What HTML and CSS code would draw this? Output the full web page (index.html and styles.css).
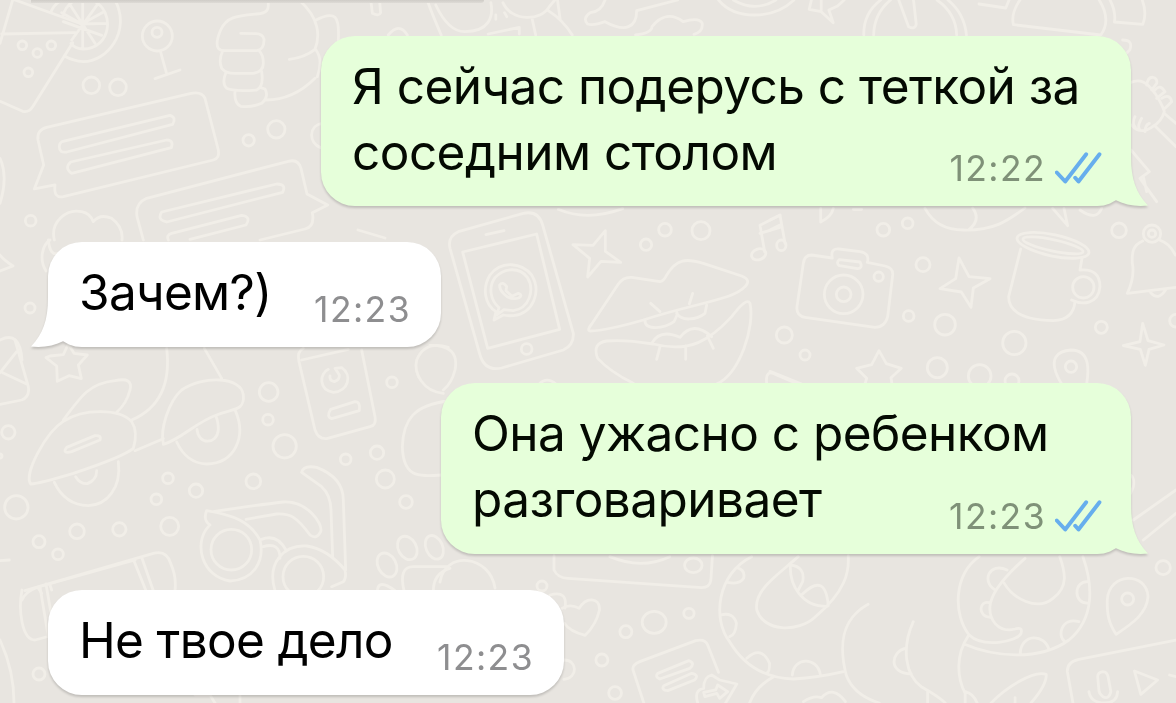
FILE: index.html
```html
<!DOCTYPE html>
<html lang="ru">
<head>
  <meta charset="UTF-8" />
  <meta name="viewport" content="width=device-width, initial-scale=1.0"/>
  <title>Чат</title>
  <link rel="stylesheet" href="styles.css">
</head>
<body>
  <svg class="wallpaper" viewBox="0 0 1176 703" aria-hidden="true">
    <!-- cocktail, microphone, fist, speech bubbles -->
    <g transform="scale(.33333)">
      <path d="M38 0L0 130M45 0L245 72M5 102L225 98M218 128L98 320Q88 338 68 334L0 304"/>
      <path d="M152 38Q160 15 185 0M188 50Q195 20 220 3M282 3C345 35 335 145 250 147Q225 146 213 130M345 0C395 95 320 185 250 185Q220 183 193 168M248 0V147M185 38L245 72L322 70M210 14L285 130M292 14L215 120M190 65L305 106M312 35L245 72"/>
      <circle cx="67" cy="136" r="13"/><circle cx="154" cy="136" r="13"/><circle cx="112" cy="159" r="13"/><circle cx="85" cy="217" r="13"/>
      <circle cx="274" cy="256" r="25"/><circle cx="354" cy="262" r="25"/><circle cx="92" cy="662" r="16"/><circle cx="746" cy="421" r="17"/><circle cx="829" cy="388" r="26"/>
      <circle cx="472" cy="108" r="45"/><circle cx="471" cy="97" r="15"/><path d="M481 153L499 218M465 236L540 210"/>
      <path d="M803 0C810 30 800 40 770 42C710 48 680 50 662 90Q645 130 655 145Q662 153 680 152H770Q793 148 792 118Q788 100 765 101L722 100M668 153Q655 180 665 205Q680 222 710 220H760Q790 216 790 190Q790 165 778 153M677 220Q665 250 680 265Q700 275 770 270Q792 260 785 215M705 274Q702 310 722 319Q755 323 785 310Q808 290 795 267L780 262M798 300C870 300 915 265 945 235M897 0C960 55 960 110 945 148Q915 172 868 178M948 60Q990 38 1005 52Q1018 65 1015 120M948 150Q970 180 952 230M968 370C925 375 925 430 962 443"/>
      <path d="M140 382L570 281Q605 273 615 295L655 450Q660 475 640 480L190 590Q160 596 165 555L103 567L131 495L114 420Q110 390 140 382Z"/>
      <path d="M186 425L510 346Q530 352 518 373L200 456Q178 460 178 440Q178 430 186 425ZM212 486L500 420Q522 420 514 443L215 520Q192 505 212 486Z"/>
      <path d="M430 720L411 650Q405 610 440 595L865 484Q895 476 903 505L921 582L983 615L937 638Q945 680 915 687L780 720M485 636L830 552Q860 552 848 577L500 666Q470 660 485 636ZM505 720Q498 705 515 700L725 646Q755 650 738 675L570 718"/>
      <path d="M163 720C150 665 200 625 245 635Q270 640 280 665Q300 640 335 655Q370 680 366 720M0 475Q25 530 0 610M175 760Q150 770 145 720"/>
    </g>
    <!-- phone, sparkle, lips, note -->
    <g transform="translate(430 200) scale(.33333)">
      <path d="M85 95L280 40Q325 30 338 75L430 400Q432 435 400 450L215 504Q165 515 150 465L60 145Q52 110 85 95ZM98 156L320 102L389 388L173 445ZM168 104L222 92"/>
      <circle cx="290" cy="447" r="16"/>
      <path d="M192 360L198 335C165 315 155 265 180 225C215 180 275 188 305 225C335 275 310 340 250 347Q232 348 220 345ZM200 345L207 323C180 300 175 260 195 233C225 200 270 203 292 232C315 270 298 325 250 332L222 329Z"/>
      <path d="M209 255Q218 243 230 260L228 272L246 289L265 280Q280 285 266 294Q240 302 220 280Q208 268 209 255Z"/>
      <path d="M429 134L489 136L526 92L526 154L572 187L513 184L473 231L479 175Z"/>
      <circle cx="648" cy="134" r="17"/><circle cx="705" cy="89" r="19"/><circle cx="813" cy="92" r="27"/>
      <path d="M480 393Q470 390 485 372L565 252Q580 230 605 232L690 245Q702 243 710 225C740 175 770 175 820 190L935 228Q965 240 945 260C910 300 790 310 640 360Q530 392 480 393Z"/>
      <path d="M662 310L690 335M788 280L778 312M645 362C645 390 700 388 732 365Q745 340 740 335M740 340C755 365 800 360 825 340L830 315"/>
      <path d="M610 550Q540 515 503 475Q485 430 530 423Q580 418 670 432C780 460 840 420 905 350Q950 290 960 310C975 380 930 520 860 552M665 430Q690 385 750 412Q790 360 845 410M690 440L680 478M767 438V478M832 408L850 445"/>
      <path d="M385 28Q470 65 578 26M0 436C60 435 85 460 75 510Q65 550 40 570M330 550Q350 530 378 552M1050 45L990 76L1004 155M990 100L1050 82M1010 550Q1005 505 1040 525L1110 555"/>
      <ellipse cx="986" cy="163" rx="22" ry="16" transform="rotate(-20 986 163)"/>
    </g>
    <!-- camera, mug, bell, stars -->
    <g transform="translate(770 200) scale(.33333)">
      <path d="M0 60L30 46L45 130M0 90L30 75"/><ellipse cx="34" cy="136" rx="14" ry="16"/>
      <circle cx="340" cy="89" r="19"/><circle cx="413" cy="70" r="16"/><circle cx="459" cy="194" r="21"/><circle cx="525" cy="374" r="31"/><circle cx="416" cy="348" r="16"/><circle cx="43" cy="405" r="24"/><circle cx="105" cy="465" r="15"/><circle cx="733" cy="429" r="35"/><circle cx="502" cy="503" r="30"/><circle cx="629" cy="528" r="34"/><circle cx="726" cy="543" r="21"/><circle cx="994" cy="382" r="18"/><circle cx="1047" cy="91" r="22"/><circle cx="1218" cy="362" r="19"/>
      <path d="M125 165L187 174Q180 145 207 147L270 155Q300 160 292 187L345 198Q370 203 368 225L353 350Q345 382 315 382L105 352Q78 348 81 320L100 190Q103 165 125 165ZM208 179L270 186Q280 205 262 206L208 197Q197 188 208 179Z"/>
      <circle cx="221" cy="283" r="58"/><circle cx="221" cy="283" r="22"/><circle cx="326" cy="230" r="14"/>
      <path d="M567 174L597 230L660 236L610 264L603 322L574 276L510 266L557 236Z"/>
      <ellipse cx="849" cy="136" rx="110" ry="32" transform="rotate(12 849 136)"/><ellipse cx="849" cy="136" rx="92" ry="17" transform="rotate(12 849 136)"/>
      <path d="M752 147L716 290C715 345 780 360 850 362Q910 360 915 305M936 175L930 210Q990 205 990 260C985 315 935 315 905 300"/><circle cx="940" cy="262" r="32"/>
      <path d="M1118 123C1090 135 1085 155 1087 190Q1095 230 1072 280L1218 262M1168 120Q1200 130 1216 165M1142 278Q1165 305 1188 268"/><circle cx="1146" cy="101" r="26"/><circle cx="1146" cy="101" r="11"/>
      <path d="M1118 370L1134 422L1182 435L1137 448L1126 496L1111 448L1060 437L1110 425Z"/>
      <path d="M285 552L290 535L260 505L305 494L327 452L349 491L394 505L363 533L366 552M0 514L95 552"/>
      <path d="M875 552C825 470 870 452 903 450C965 450 955 520 950 552"/><circle cx="903" cy="500" r="17"/>
      <path d="M465 25Q500 90 580 90C670 92 710 65 765 24M608 24Q635 60 595 90M152 25V66Q185 50 190 25M848 25L893 77L882 25M930 30Q980 65 995 25M250 28H275"/>
    </g>
    <!-- cap, rocket eyes, glasses, paw -->
    <g transform="translate(0 340) scale(.33333)">
      <path d="M45 0L85 140Q90 170 65 180L0 193M50 35L0 98M8 98L80 132"/>
      <path d="M150 48L190 44L205 12L222 40L262 45L235 75L244 116L207 107L172 124L170 78L138 53Z"/>
      <path d="M190 240C245 165 270 130 345 122Q400 110 390 150Q380 190 350 217M92 432C70 400 140 275 190 244C250 205 360 205 395 245Q415 275 400 325C370 350 280 380 220 400Q120 430 92 432ZM500 25C515 150 465 210 395 240M405 332L490 296M200 322L285 287Q305 285 300 300L215 335Q185 342 200 322Z"/>
      <path d="M355 365C365 445 320 495 265 497Q195 495 163 427M227 410Q240 432 262 431Q290 420 290 392"/>
      <path d="M490 310C480 270 505 185 545 150C610 105 725 110 730 165C735 215 695 205 650 225C590 245 540 300 490 313M613 25L665 115M706 212C740 290 705 370 620 372Q560 370 530 306M591 268C595 315 650 315 655 270Q655 245 648 230"/>
      <circle cx="806" cy="156" r="28"/><circle cx="804" cy="239" r="16"/><circle cx="854" cy="319" r="35"/><circle cx="1176" cy="127" r="16"/><circle cx="1131" cy="338" r="20"/><circle cx="1037" cy="358" r="16"/><circle cx="1156" cy="417" r="27"/><circle cx="1218" cy="486" r="19"/><circle cx="760" cy="424" r="22"/><circle cx="504" cy="415" r="16"/><circle cx="588" cy="452" r="20"/><circle cx="469" cy="478" r="16"/><circle cx="509" cy="559" r="27"/><circle cx="358" cy="568" r="20"/><circle cx="231" cy="574" r="22"/><circle cx="117" cy="605" r="18"/><circle cx="174" cy="643" r="16"/><circle cx="49" cy="502" r="35"/><circle cx="25" cy="277" r="20"/><circle cx="0" cy="348" r="6"/>
      <path d="M910 25Q890 35 897 65L945 270Q955 298 980 296L1110 260Q1130 255 1125 230L1085 30M905 60L1045 28M992 208L1065 185Q1082 185 1078 212L995 236Q978 230 992 208Z"/>
      <path d="M985 88C958 100 955 150 1000 157C1045 155 1058 105 1025 83L1005 85L1018 105Q1020 118 1003 125Q988 122 990 108"/>
      <path d="M1330 160C1270 155 1240 100 1250 60Q1275 0 1345 22M1345 183C1240 195 1210 240 1207 320C1210 410 1250 410 1325 405"/>
      <circle cx="694" cy="629" r="61"/><circle cx="910" cy="710" r="61"/>
      <path d="M625 560C580 610 605 710 690 723C760 720 795 665 780 600C750 545 700 525 620 512Q608 540 630 555M640 515Q770 495 850 486C920 482 970 550 962 575Q950 600 930 585C890 530 870 520 830 522L738 538M785 598Q830 580 858 630M790 620Q840 605 840 655M825 752C800 670 850 615 920 618C970 625 1010 660 1035 690Q1040 715 1030 725L995 740M905 397Q910 375 950 382C1010 405 1030 440 1030 480L1037 690M905 397L965 440Q992 465 993 510L998 650"/>
      <path d="M75 752L460 640Q500 630 512 670Q530 710 525 752M400 658L438 752M425 652L460 752M115 745L125 760M150 735L155 750M0 662L28 660"/>
      <ellipse cx="1161" cy="675" rx="27" ry="38" transform="rotate(-28 1161 675)"/><ellipse cx="1222" cy="624" rx="27" ry="37" transform="rotate(-28 1222 624)"/><ellipse cx="1303" cy="622" rx="25" ry="37" transform="rotate(-24 1303 622)"/>
      <path d="M1212 752Q1195 680 1240 680H1340M1350 685Q1300 700 1300 752M1132 752Q1135 715 1185 752"/>
    </g>
    <!-- bottom right: heart, doughnut, octopus, pin, keyboard -->
    <g transform="translate(550 545) scale(.3992 .33333)">
      <path d="M10 32V75Q20 100 45 100L380 128Q400 128 403 105L407 32M150 35Q230 75 300 35"/>
      <ellipse cx="359" cy="61" rx="22" ry="22"/><ellipse cx="261" cy="232" rx="30" ry="33"/><ellipse cx="348" cy="205" rx="13" ry="15"/><ellipse cx="190" cy="260" rx="15" ry="18"/><ellipse cx="130" cy="345" rx="15" ry="18"/><ellipse cx="163" cy="444" rx="16" ry="19"/><ellipse cx="1536" cy="68" rx="18" ry="21"/>
      <path d="M30 190Q50 175 73 190C90 155 125 155 124 195Q115 240 88 271Q50 260 36 235M35 345C70 345 70 400 35 403"/>
      <path d="M235 474L208 375Q205 360 225 350L365 287Q388 280 395 300L422 382M270 385L348 347Q365 355 350 370L275 402Q262 395 270 385ZM285 422L355 385Q375 390 362 405L295 437Q278 435 285 422Z"/>
      <path d="M370 474Q360 435 385 430Q385 395 405 390L425 405L468 417L440 474M385 442L415 435L420 420L445 440L425 460L418 445L388 455Z"/>
      <path d="M505 35C420 85 405 220 450 290C490 370 550 400 610 402Q670 398 735 380M622 35C570 90 510 135 518 195C535 260 620 265 665 215C740 140 750 80 747 32M468 68Q490 75 485 100Q475 120 445 112M427 210Q460 200 467 235Q465 270 450 275M493 340Q530 300 550 355Q550 380 545 382M607 390C610 335 670 335 677 388M602 60Q640 65 633 110L622 135M602 60C600 120 630 185 695 184M632 148Q690 80 697 182M500 474Q515 425 560 395M635 470Q660 450 680 458Q710 420 740 470"/>
      <path d="M797 178C725 225 725 310 742 390Q760 450 825 474M910 230C880 310 890 390 930 425Q975 455 990 474M890 310C855 320 845 385 905 387M946 440V474"/>
      <path d="M1075 35C1010 90 1010 210 1050 270C1085 310 1170 290 1180 265Q1185 245 1165 252C1120 265 1100 220 1102 185Q1105 130 1190 40M1138 115C1160 160 1220 200 1260 160C1300 125 1290 80 1277 35M1145 75C1100 50 1080 110 1115 135M1100 173C1075 165 1070 215 1103 217M1335 35C1360 120 1365 220 1300 285C1225 350 1110 335 1037 297M1350 110C1310 105 1310 180 1350 174M1325 230C1280 215 1270 275 1290 290M1178 325C1180 265 1240 265 1250 315M1048 272C1015 330 1020 400 1040 445V474M1040 440Q1060 445 1070 474M1105 474C1140 430 1210 375 1243 388C1245 420 1215 460 1205 474M1165 474V458"/>
      <path d="M1418 268C1400 235 1395 210 1396 165C1400 80 1495 80 1498 155C1495 205 1460 235 1418 268Z"/><ellipse cx="1447" cy="162" rx="15" ry="18"/>
      <path d="M1310 474L1296 380Q1295 350 1325 343L1568 285M1385 380Q1395 380 1398 395L1405 440Q1400 465 1385 455Q1375 445 1375 435L1372 395Q1372 382 1385 380ZM1350 440Q1355 474 1390 474Q1420 474 1422 440M1464 378L1522 405L1480 448ZM1552 390L1568 395"/>
    </g>
    <!-- strip above the first message -->
    <g transform="translate(320 0) scale(.546 .33333)">
      <path d="M93 0L96 40Q108 50 111 38L109 0M198 8Q205 40 222 105M212 15Q235 95 265 95C310 95 318 50 313 8M335 8C350 65 405 65 420 20L430 0M388 52L395 105M418 32Q445 60 462 105M435 0L440 60M125 105Q145 65 160 105M308 102L365 82V102M322 45V58M338 38L342 50"/>
      <path d="M522 0Q515 35 495 38Q480 55 490 72Q500 78 522 65Q550 90 565 80Q580 70 580 32L655 0M578 105Q608 98 608 80C625 45 645 40 665 65Q695 50 700 70Q702 95 685 103M730 0C760 60 830 60 868 0M757 0Q797 38 835 0"/>
      <path d="M900 0L896 28L918 35L940 68L932 30L948 18L960 0M918 0V30M996 105Q995 40 1027 0M1014 105Q1015 40 1045 0M1060 0L1078 80Q1090 90 1092 72L1087 0M1130 0Q1165 40 1166 105M1150 0Q1180 40 1184 105M1207 12L1256 24L1262 0M1282 0Q1265 40 1270 74L1430 105Q1450 60 1427 0M1447 0Q1458 35 1455 66L1507 73Q1515 40 1506 0M1470 120Q1490 120 1483 150L1478 158"/>
    </g>
    <!-- right edge hand and bolt -->
    <g transform="translate(1110 0) scale(.33333)">
      <path d="M60 248C90 235 110 245 135 280Q155 310 163 335Q155 365 125 382Q90 405 65 375M110 255C115 220 145 230 140 250L125 270M135 270Q150 250 165 275L140 295M155 295Q180 280 185 305L165 325M75 350Q65 370 75 380M95 355Q80 380 90 390M118 370Q105 375 105 395M165 342L198 370M135 378L198 440M63 450L118 515L90 535L140 605M100 530L110 575"/>
      <path d="M62 1425Q75 1435 70 1460L62 1480M70 1560L198 1470M100 1620L198 1540"/>
    </g>
    <!-- bits peeking around the incoming messages -->
    <path d="M0 255Q4 260 13 266L0 271M50 240C42 245 39 260 46 271M0 340Q20 330 22 360M358 230L385 238M22 590C18 610 22 640 35 640L50 636M22 600Q25 592 38 587L135 560M40 587L48 635M46 584L53 625M0 640Q14 670 14 703M440 582C445 550 490 555 495 588M550 595Q568 590 565 608M195 695H210L215 703M240 696V703"/>
    <circle cx="30" cy="308" r="5"/><circle cx="39" cy="674" r="6"/><circle cx="542" cy="586" r="5"/>
  </svg>

  <div class="chat">
    <div class="previous"></div>

    <div class="message out first">
      <p class="text">Я сейчас подерусь с теткой за<br>соседним столом</p>
      <div class="meta">
        <span class="time">12:22</span>
        <svg class="ticks" viewBox="0 0 47 32"><path d="M1.8 20.5L10.2 29.5L31.2 2.2M20.2 25.8L23.5 29.5L44.5 2.2"/></svg>
      </div>
      <svg class="tail" viewBox="0 0 51 50"><path d="M34 0C34 22 39 36 51 48.500C40 50 28 48 18.500 43L0 20Z"/></svg>
    </div>

    <div class="message in second">
      <p class="text">Зачем?)</p>
      <div class="meta"><span class="time">12:23</span></div>
      <svg class="tail" viewBox="0 0 51 50"><path d="M34 0C34 22 39 36 51 48.500C40 50 28 48 18.500 43L0 20Z"/></svg>
    </div>

    <div class="message out third">
      <p class="text">Она ужасно с ребенком<br>разговаривает</p>
      <div class="meta">
        <span class="time">12:23</span>
        <svg class="ticks" viewBox="0 0 47 32"><path d="M1.8 20.5L10.2 29.5L31.2 2.2M20.2 25.8L23.5 29.5L44.5 2.2"/></svg>
      </div>
      <svg class="tail" viewBox="0 0 51 50"><path d="M34 0C34 22 39 36 51 48.500C40 50 28 48 18.500 43L0 20Z"/></svg>
    </div>

    <div class="message in fourth">
      <p class="text">Не твое дело</p>
      <div class="meta"><span class="time">12:23</span></div>
    </div>
  </div>
</body>
</html>
```
FILE: styles.css
```css
* {
  box-sizing: border-box;
}

body {
  margin: 0;
  height: 703px;
  overflow: hidden;
  position: relative;
  background: #e8e5e0;
  font-family: Inter, 'Liberation Sans', sans-serif;
}

.wallpaper {
  position: absolute;
  top: 0;
  left: 0;
  width: 1176px;
  height: 703px;
  fill: none;
  stroke: #f1eee8;
  stroke-width: 2.8px;
  stroke-linecap: round;
  stroke-linejoin: round;
}

.wallpaper * {
  vector-effect: non-scaling-stroke;
}

.chat {
  position: relative;
  display: flex;
  flex-direction: column;
  gap: 36px;
  height: 703px;
  padding: 0 45px 0 48px;
}

/* lower edge of the message scrolled out of view */
.previous {
  width: 453px;
  height: 3px;
  margin: 0 0 -3px -17px;
  flex: none;
  border-radius: 0 0 20px 0;
  background: linear-gradient(#cfccc7, #dedbd6);
}

.message {
  position: relative;
  display: grid;
  flex: none;
  padding: 17px 31px 0;
  border-radius: 34px;
  filter: drop-shadow(0 2px 1px rgba(0, 0, 0, 0.17));
}

.out {
  align-self: flex-end;
  background: #e6ffda;
  color: #040a02;
}

.in {
  align-self: flex-start;
  background: #fff;
  color: #000;
}

.first {
  width: 810px;
  height: 170px;
}

.second {
  width: 393px;
  height: 105px;
}

.third {
  width: 690px;
  height: 171px;
}

.fourth {
  width: 516px;
  height: 105px;
}

.text {
  grid-area: 1 / 1;
  margin: 0;
  font-size: 49.5px;
  line-height: 66px;
  letter-spacing: -0.54px;
  white-space: nowrap;
}

.in .text {
  letter-spacing: -0.68px;
}

.meta {
  grid-area: 1 / 1;
  align-self: end;
  justify-self: end;
  display: flex;
  align-items: flex-end;
  gap: 9px;
  margin-right: -2px;
  padding-bottom: 19px;
}

.in .meta {
  margin-right: -1px;
}

.time {
  font-size: 35.5px;
  line-height: 36px;
  letter-spacing: 1.4px;
  color: #8e8e90;
}

.out .time {
  color: #7f9178;
}

.ticks {
  width: 47px;
  height: 32px;
  margin-bottom: 3px;
  fill: none;
  stroke: #67aeed;
  stroke-width: 3.9;
  stroke-linecap: round;
  stroke-linejoin: round;
}

.tail {
  position: absolute;
  right: -17px;
  bottom: -1px;
  width: 51px;
  height: 50px;
  fill: #e6ffda;
}

.in .tail {
  right: auto;
  left: -17px;
  fill: #fff;
  transform: scaleX(-1);
}
```
